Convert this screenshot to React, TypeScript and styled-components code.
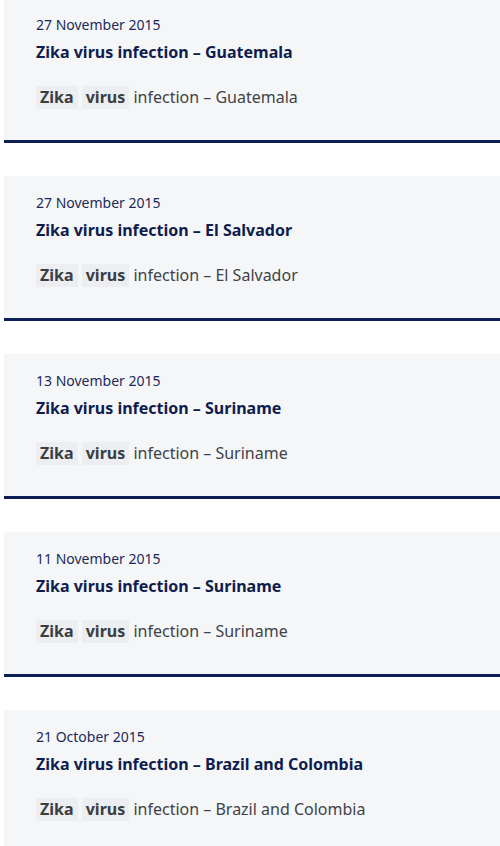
import React from "react";
import styled, { createGlobalStyle } from "styled-components";

const Global = createGlobalStyle`
  html, body { margin: 0; padding: 0; background: #ffffff; overflow: hidden; }
  body { font-family: "Noto Sans", "Open Sans", sans-serif; }
`;

const List = styled.div`
  display: flex;
  flex-direction: column;
  gap: 33px;
  padding-left: 4px;
  margin-top: -2px;
`;

const Card = styled.article`
  background: #f5f6f8;
  border-bottom: 3px solid #0c1f55;
  padding: 17px 32px 0 32px;
  box-sizing: border-box;
  height: 145px;
`;

const DateLine = styled.div`
  font-size: 14px;
  line-height: 20px;
  color: #1b2a58;
`;

const Title = styled.h3`
  margin: 6px 0 0;
  font-size: 16px;
  font-weight: 700;
  line-height: 22px;
  color: #0f1d4d;
`;

const Excerpt = styled.p`
  margin: 22px 0 0;
  font-size: 16px;
  line-height: 24px;
  color: #3f4347;
`;

const Mark = styled.mark`
  background: #eceef1;
  color: #3a3d41;
  font-weight: 700;
  padding: 0 4px;
  display: inline-block;
  line-height: 23px;
`;

const items = [
  { date: "27 November 2015", place: "Guatemala" },
  { date: "27 November 2015", place: "El Salvador" },
  { date: "13 November 2015", place: "Suriname" },
  { date: "11 November 2015", place: "Suriname" },
  { date: "21 October 2015", place: "Brazil and Colombia" },
];

export default function App() {
  return (
    <>
      <Global />
      <List>
        {items.map((it, i) => (
          <Card key={i}>
            <DateLine>{it.date}</DateLine>
            <Title>Zika virus infection – {it.place}</Title>
            <Excerpt>
              <Mark>Zika</Mark> <Mark>virus</Mark> infection – {it.place}
            </Excerpt>
          </Card>
        ))}
      </List>
    </>
  );
}
